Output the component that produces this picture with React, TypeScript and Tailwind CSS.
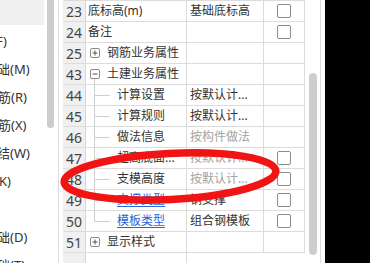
import React from "react";

const FONT = '"Noto Sans", "Noto Sans CJK SC", sans-serif';

type Row = {
  n: number;
  name: string;
  value?: string;
  kind: "plain" | "group" | "child";
  open?: boolean;
  nameColor?: "blue" | "dark";
  valueGrey?: boolean;
  check?: boolean;
  last?: boolean;
};

const rows: Row[] = [
  { n: 23, name: "底标高(m)", value: "基础底标高", kind: "plain", check: true },
  { n: 24, name: "备注", value: "", kind: "plain", check: true },
  { n: 25, name: "钢筋业务属性", kind: "group", open: false },
  { n: 43, name: "土建业务属性", kind: "group", open: true },
  { n: 44, name: "计算设置", value: "按默认计...", kind: "child" },
  { n: 45, name: "计算规则", value: "按默认计...", kind: "child" },
  { n: 46, name: "做法信息", value: "按构件做法", kind: "child", valueGrey: true },
  { n: 47, name: "超高底面...", value: "按默认计...", kind: "child", valueGrey: true, check: true },
  { n: 48, name: "支模高度", value: "按默认计...", kind: "child", valueGrey: true, check: true },
  { n: 49, name: "支撑类型", value: "钢支撑", kind: "child", nameColor: "blue", check: true },
  { n: 50, name: "模板类型", value: "组合钢模板", kind: "child", nameColor: "blue", check: true, last: true },
  { n: 51, name: "显示样式", kind: "group", open: false },
];

function Box({ open }: { open: boolean }) {
  return (
    <div className="w-[10px] h-[10px] border border-[#8a8a8a] rounded-[2px] flex items-center justify-center bg-white shrink-0">
      <svg width="8" height="8" viewBox="0 0 8 8">
        <line x1="1.5" y1="4" x2="6.5" y2="4" stroke="#555" strokeWidth="1" />
        {!open && <line x1="4" y1="1.5" x2="4" y2="6.5" stroke="#555" strokeWidth="1" />}
      </svg>
    </div>
  );
}

function GridRow({ r }: { r: Row }) {
  const nameCls =
    r.nameColor === "blue" ? "text-[#2a62d8] underline underline-offset-2" : "text-[#333]";
  return (
    <div className="flex h-[21px] border-b border-[#dcdcdc]">
      <div className="w-[23px] shrink-0 bg-[#f0f0f0] border-r border-[#d6d6d6] flex items-center justify-center text-[14px] text-[#444]">
        {r.n}
      </div>
      <div className="w-[101px] shrink-0 border-r border-[#dcdcdc] relative flex items-center overflow-hidden whitespace-nowrap text-[12px]">
        {r.kind === "plain" && <span className="pl-[2px] text-[#333]">{r.name}</span>}
        {r.kind === "group" && (
          <div className="flex items-center pl-[4px]">
            <Box open={!!r.open} />
            <span className="ml-[7px] text-[#333]">{r.name}</span>
          </div>
        )}
        {r.kind === "child" && (
          <>
            <div
              className={
                r.last
                  ? "absolute left-[8px] top-0 h-[10px] w-px bg-[#cfcfcf]"
                  : "absolute left-[8px] top-0 h-[21px] w-px bg-[#cfcfcf]"
              }
            />
            <div className="absolute left-[8px] top-[10px] w-[16px] h-px bg-[#cfcfcf]" />
            <span className={"pl-[31px] " + nameCls}>{r.name}</span>
          </>
        )}
        {r.kind === "group" && r.open && (
          <div className="absolute left-[8px] top-[15px] h-[6px] w-px bg-[#cfcfcf]" />
        )}
      </div>
      <div
        className={
          "w-[77px] shrink-0 border-r border-[#dcdcdc] flex items-center overflow-hidden whitespace-nowrap text-[12px] pl-[3px] " +
          (r.valueGrey ? "text-[#a3a3a3]" : "text-[#333]")
        }
      >
        {r.value}
      </div>
      <div className="w-[41px] shrink-0 border-r border-[#dcdcdc] flex items-center justify-center">
        {r.check && (
          <div className="w-[14px] h-[14px] border border-[#8c8c8c] rounded-[2px] bg-white" />
        )}
      </div>
    </div>
  );
}

const leftItems: { t: string; ml: string }[] = [
  { t: "(F)", ml: "-ml-[8px]" },
  { t: "基础(M)", ml: "-ml-[16px]" },
  { t: "钢筋(R)", ml: "-ml-[15px]" },
  { t: "钢筋(X)", ml: "-ml-[15px]" },
  { t: "连结(W)", ml: "-ml-[16px]" },
  { t: "(K)", ml: "-ml-[5px]" },
  { t: "", ml: "" },
  { t: "基础(D)", ml: "-ml-[16px]" },
  { t: "基础(T)", ml: "-ml-[16px]" },
];

export default function App() {
  return (
    <div
      className="relative w-[370px] h-[263px] overflow-hidden bg-white flex"
      style={{ fontFamily: FONT }}
    >
      {/* left panel */}
      <div className="w-[59px] shrink-0 h-full border-r border-[#dcdcdc] flex">
        <div className="w-[44px] shrink-0 overflow-hidden">
          <div className="h-[25px] bg-[#f0f0f0]" />
          <div className="h-[3px]" />
          {leftItems.map((it, i) => (
            <div key={i} className="h-[28px] flex items-center whitespace-nowrap text-[13px] text-[#333]">
              <span className={it.ml}>{it.t}</span>
            </div>
          ))}
        </div>
        <div className="ml-[3px] w-[7px] h-[128px] bg-[#cdcdcd] rounded-b-full" />
      </div>

      {/* grid */}
      <div className="ml-[4px] w-[242px] shrink-0 h-full flex flex-col">
        <div className="h-px bg-[#dcdcdc]" />
        {rows.map((r) => (
          <GridRow key={r.n} r={r} />
        ))}
        <div className="flex flex-1">
          <div className="w-[23px] bg-[#f0f0f0] border-r border-[#d6d6d6]" />
          <div className="w-[101px] border-r border-[#dcdcdc]" />
        </div>
      </div>

      {/* right scrollbar */}
      <div className="w-[16px] shrink-0 h-full border-r border-[#dcdcdc] flex justify-center">
        <div className="mt-[73px] w-[8px] h-[182px] bg-[#cdcdcd] rounded-full" />
      </div>
      <div className="w-[4px] shrink-0 bg-white" />
      <div className="flex-1 bg-black" />

      {/* red ellipse annotation */}
      <svg className="absolute inset-0 pointer-events-none" width="370" height="263" viewBox="0 0 370 263">
        <ellipse
          cx="170"
          cy="176.5"
          rx="106"
          ry="23"
          fill="none"
          stroke="#f01414"
          strokeWidth="7.5"
          transform="rotate(-3 170 176.5)"
        />
      </svg>
    </div>
  );
}
